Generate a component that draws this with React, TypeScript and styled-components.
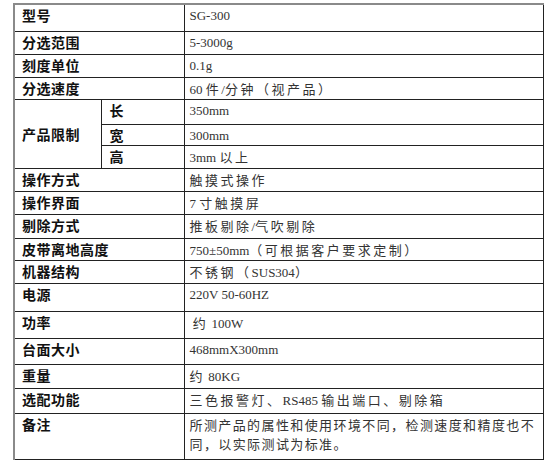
import React from "react";
import styled, { createGlobalStyle } from "styled-components";

const Global = createGlobalStyle`
  html, body { margin: 0; padding: 0; background: #fff; }
  body { font-family: "Noto Sans CJK SC", sans-serif; }
`;

const Page = styled.div`
  padding: 3px 12px 0 13px;
  width: 554px;
  box-sizing: border-box;
`;

const Table = styled.table`
  width: 529px;
  border-collapse: collapse;
  table-layout: fixed;
  border-top: 2px solid #8a8a8a;
  border-left: 2px solid #8a8a8a;
  border-right: 1px solid #222;
  border-bottom: 1px solid #222;
`;

const Row = styled.tr<{ $h: number; $soft?: boolean }>`
  height: ${(p) => p.$h}px;
  & > td {
    border-top: 1px solid ${(p) => (p.$soft ? "#8a8a8a" : "#222")};
  }
`;

const Label = styled.td<{ $mid?: boolean }>`
  border: 1px solid #222;
  padding: 2px 8px 0 7px;
  vertical-align: ${(p) => (p.$mid ? "middle" : "top")};
  font-family: "Noto Sans CJK SC", sans-serif;
  font-weight: 700;
  font-size: 14px;
  line-height: 17px;
  letter-spacing: 0.5px;
  color: #111;
  white-space: nowrap;
`;

const Sub = styled(Label)`
  padding-left: 8px;
`;

const Value = styled.td<{ $tight?: boolean }>`
  border: 1px solid #222;
  padding: 2px 4px 0 5px;
  vertical-align: top;
  font-family: "Liberation Serif", "Noto Sans CJK SC", serif;
  font-size: 13px;
  line-height: ${(p) => (p.$tight ? "18px" : "17px")};
  color: #333;
  white-space: pre-wrap;
  & .cj {
    font-family: "Noto Sans CJK SC", sans-serif;
    letter-spacing: ${(p) => (p.$tight ? "1.4px" : "2.5px")};
  }
`;

function Txt({ s }: { s: string }) {
  const parts = s.split(/([\u3000-\u303f\u4e00-\u9fff\uff00-\uffef]+)/);
  return (
    <>
      {parts.map((p, i) =>
        /[\u3000-\u303f\u4e00-\u9fff\uff00-\uffef]/.test(p) ? (
          <span className="cj" key={i}>
            {p}
          </span>
        ) : (
          <React.Fragment key={i}>{p}</React.Fragment>
        )
      )}
    </>
  );
}

type R = { l: string; v: string; h: number; soft?: boolean };

const rows: R[] = [
  { l: "型号", v: "SG-300", h: 27 },
  { l: "分选范围", v: "5-3000g", h: 23 },
  { l: "刻度单位", v: "0.1g", h: 23 },
  { l: "分选速度", v: "60 件/分钟（视产品）", h: 22 },
];

const rows2: R[] = [
  { l: "操作方式", v: "触摸式操作", h: 23, soft: true },
  { l: "操作界面", v: "7 寸触摸屏", h: 23 },
  { l: "剔除方式", v: "推板剔除/气吹剔除", h: 24 },
  { l: "皮带离地高度", v: "750±50mm（可根据客户要求定制）", h: 22 },
  { l: "机器结构", v: "不锈钢（SUS304）", h: 23, soft: true },
  { l: "电源", v: "220V 50-60HZ", h: 28, soft: true },
  { l: "功率", v: " 约 100W", h: 27, soft: true },
  { l: "台面大小", v: "468mmX300mm", h: 26, soft: true },
  { l: "重量", v: "约 80KG", h: 24 },
  { l: "选配功能", v: "三色报警灯、RS485 输出端口、剔除箱", h: 25 },
];

export default function App() {
  return (
    <Page>
      <Global />
      <Table>
        <colgroup>
          <col style={{ width: 87 }} />
          <col style={{ width: 83 }} />
          <col style={{ width: 359 }} />
        </colgroup>
        <tbody>
          {rows.map((r) => (
            <Row key={r.l} $h={r.h} $soft={r.soft}>
              <Label colSpan={2}>{r.l}</Label>
              <Value>
                <Txt s={r.v} />
              </Value>
            </Row>
          ))}
          <Row $h={25} $soft>
            <Label rowSpan={3} $mid>
              产品限制
            </Label>
            <Sub>长</Sub>
            <Value>
              <Txt s="350mm" />
            </Value>
          </Row>
          <Row $h={21} $soft>
            <Sub>宽</Sub>
            <Value>
              <Txt s="300mm" />
            </Value>
          </Row>
          <Row $h={23} $soft>
            <Sub>高</Sub>
            <Value>
              <Txt s="3mm 以上" />
            </Value>
          </Row>
          {rows2.map((r) => (
            <Row key={r.l} $h={r.h} $soft={r.soft}>
              <Label colSpan={2}>{r.l}</Label>
              <Value>
                <Txt s={r.v} />
              </Value>
            </Row>
          ))}
          <Row $h={46} $soft>
            <Label colSpan={2}>备注</Label>
            <Value $tight>
              <Txt s={"所测产品的属性和使用环境不同，检测速度和精度也不\n同，以实际测试为标准。"} />
            </Value>
          </Row>
        </tbody>
      </Table>
    </Page>
  );
}
